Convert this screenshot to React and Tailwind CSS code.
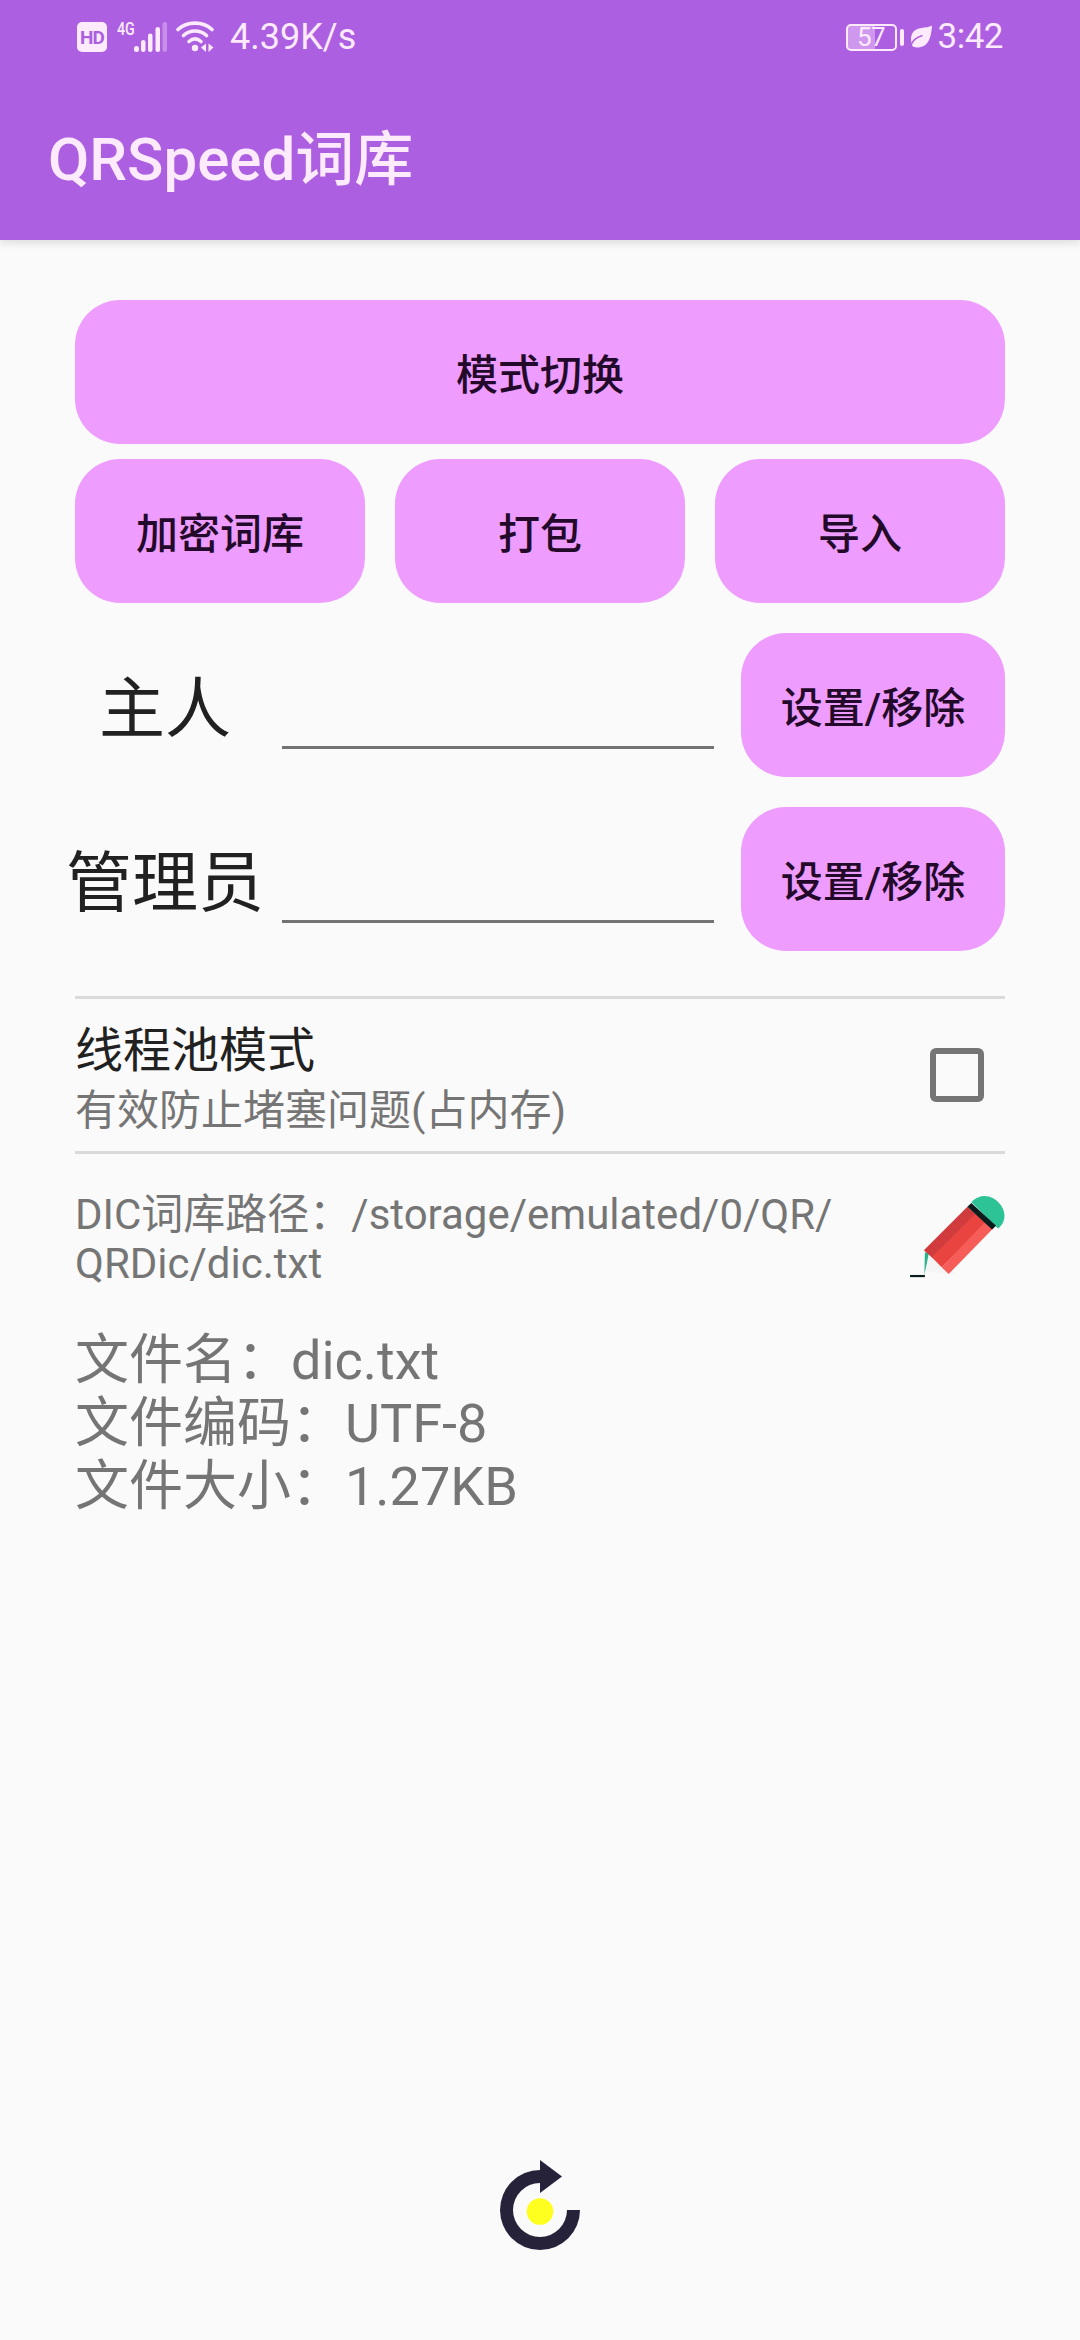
import { useState } from "react";

const details = [
  { label: "文件名", value: "dic.txt" },
  { label: "文件编码", value: "UTF-8" },
  { label: "文件大小", value: "1.27KB" },
];

const SignalIcon = () => (
  <svg className="w-[34px] h-[32px]" viewBox="0 0 34 32" fill="#fdeafd">
    <rect x="0" y="25" width="5" height="6" rx="2.5" />
    <rect x="7" y="19" width="4.5" height="12" rx="2.2" />
    <rect x="14" y="12.5" width="4.5" height="18.5" rx="2.2" />
    <rect x="21.5" y="6" width="4.5" height="25" rx="2.2" />
    <rect x="28.5" y="1" width="4.5" height="30" rx="2.2" opacity="0.35" />
  </svg>
);

const WifiIcon = () => (
  <svg className="w-[38px] h-[32px]" viewBox="0 0 38 32" fill="none" stroke="#fdeafd" strokeWidth="3.6" strokeLinecap="round">
    <path d="M2 8.5C11 0 27 0 36 8.5" />
    <path d="M7.5 14.5C14 8.5 24 8.5 30.5 14.5" />
    <path d="M13 20.5C17 17 21 17 25 20.5" />
    <circle cx="19" cy="27" r="3.2" fill="#fdeafd" stroke="none" />
    <path d="M30 22.500v8.500l-5-4.500zM32.500 31V22.500l5 4z" fill="#fdeafd" stroke="none" />
  </svg>
);

const LeafIcon = () => (
  <svg className="w-[23px] h-[26px]" viewBox="0 0 24 26">
    <path d="M23 1C22 13 20 24 7 24C5 24 3.5 23.5 2.5 22.5C-1 12 2 5 12 3.5C16 3 20 3 23 1Z" fill="#fdeafd" />
    <path d="M1 21.500C3 16 8 13 13 11.500" fill="none" stroke="#ac5fe0" strokeWidth="1.5" />
  </svg>
);

const PencilIcon = () => (
  <svg className="w-[95px] h-[85px]" viewBox="0 0 96 86">
    <path d="M15 77L36 80L46 80L18 53Z" fill="#f5f5f5" />
    <path d="M14.500 81L15 58L19 59Z" fill="#26b58a" />
    <path d="M62 7C72-3 84 1 90 8C97 15 98 27 89 34Z" fill="#2ec297" />
    <path d="M14 56L58 12L67 20L23 64Z" fill="#d03c3e" />
    <path d="M22 63L66 19L77 28L32 73Z" fill="#ea4440" />
    <path d="M32 73L76 27L84 34L39 80Z" fill="#f65d58" />
    <path d="M58 12L62 8L87 31L83 35Z" fill="#081d1c" />
    <path d="M0 82h15" stroke="#081d1c" strokeWidth="2.2" />
  </svg>
);

const RefreshIcon = () => (
  <svg className="w-[80px] h-[90px]" viewBox="0 0 80 90">
    <path d="M40 10A40 40 0 1 0 80 50H67A27 27 0 1 1 40 23V33L62 16.5L40 0Z" fill="#26223a" />
    <circle cx="40" cy="51.5" r="13.3" fill="#ffff1f" />
  </svg>
);

const ActionButton = ({ children, className = "" }) => (
  <button
    className={`h-[144px] rounded-[45px] bg-[#ee9cfd] pt-[7px] text-[42px] leading-[50px] font-medium text-[#240a2a] ${className}`}
  >
    {children}
  </button>
);

const AccountRow = ({ label }) => (
  <div className="flex h-[144px]">
    <div className="flex w-[180px] shrink-0 items-center justify-center pt-[10px] whitespace-nowrap text-[66px] leading-[78px] text-[#212121]">
      {label}
    </div>
    <input
      type="text"
      className="ml-[27px] h-[116px] w-[432px] border-b-[3px] border-[#737373] bg-transparent text-[54px] outline-none"
    />
    <ActionButton className="ml-[27px] w-[264px]">设置/移除</ActionButton>
  </div>
);

const App = () => {
  const [poolMode, setPoolMode] = useState(false);

  return (
    <div className="flex min-h-[2340px] w-[1080px] flex-col bg-[#fafafa] font-['Roboto','Noto_Sans_CJK_SC',sans-serif]">
      <header className="h-[240px] bg-[#ac5fe0] text-[#fdeafd] shadow-[0_3px_8px_rgba(0,0,0,0.12)]">
        {/* Status bar */}
        <div className="flex h-[74px] items-center justify-between px-[77px]">
          <div className="flex items-center">
            <div className="flex h-[30px] w-[30px] items-center justify-center rounded-[5px] bg-[#fdeafd] text-[19px] leading-none font-bold tracking-[-1px] text-[#ac5fe0]">
              HD
            </div>
            <div className="ml-[10px] flex h-[32px] items-start">
              <span className="w-[17px] origin-left scale-x-75 text-[19px] leading-[15px] font-medium">4G</span>
              <SignalIcon />
            </div>
            <div className="ml-[8px]">
              <WifiIcon />
            </div>
            <span className="ml-[16px] text-[36px] leading-[42px]">4.39K/s</span>
          </div>
          <div className="flex items-center">
            <div className="flex h-[27px] w-[51px] items-center justify-center rounded-[5px] border-2 border-[#fdeafd] bg-linear-to-r from-[#cf98ee] from-57% to-[#ac5fe0] to-57% text-[26px] leading-none tracking-[-0.5px]">
              57
            </div>
            <div className="ml-[3px] h-[17px] w-[4px] rounded-[2px] bg-[#fdeafd]"></div>
            <div className="ml-[6px] mr-[5px]">
              <LeafIcon />
            </div>
            <span className="text-[35px] leading-[42px] tracking-[-0.5px]">3:42</span>
          </div>
        </div>

        <h1 className="pt-[49px] pl-[48px] text-[60px] leading-[74px] font-medium">
          QRSpeed<span className="text-[59px]">词库</span>
        </h1>
      </header>

      <main className="flex flex-col px-[75px] pt-[60px]">
        <ActionButton>模式切换</ActionButton>
        <div className="mt-[15px] grid grid-cols-3 gap-[30px]">
          <ActionButton>加密词库</ActionButton>
          <ActionButton>打包</ActionButton>
          <ActionButton>导入</ActionButton>
        </div>

        <div className="mt-[30px] flex flex-col gap-[30px]">
          <AccountRow label="主人" />
          <AccountRow label="管理员" />
        </div>

        {/* Thread pool setting */}
        <div className="mt-[45px] flex h-[158px] items-center justify-between border-y-[3px] border-[#dadada] pr-[21px]">
          <div className="pt-[7px]">
            <div className="text-[48px] leading-[63px] text-[#212121]">线程池模式</div>
            <div className="text-[42px] leading-[57px] text-[#757575]">有效防止堵塞问题(占内存)</div>
          </div>
          <button
            aria-pressed={poolMode}
            onClick={() => setPoolMode(!poolMode)}
            className={`h-[54px] w-[54px] rounded-[6px] border-[6px] border-[#757575] ${poolMode ? "bg-[#757575]" : ""}`}
          ></button>
        </div>

        {/* Dictionary path */}
        <div className="mt-[36px] flex items-start justify-between text-[#757575]">
          <p className="text-[42px] leading-[49px]">
            DIC词库路径：/storage/emulated/0/QR/
            <br />
            QRDic/dic.txt
          </p>
          <div className="mt-[5px]">
            <PencilIcon />
          </div>
        </div>

        <div className="mt-[41px] text-[54px] leading-[63px] text-[#757575]">
          {details.map((item) => (
            <div key={item.label}>
              {item.label}：{item.value}
            </div>
          ))}
        </div>
      </main>

      <div className="mt-auto flex justify-center pb-[90px]">
        <RefreshIcon />
      </div>
    </div>
  );
};

export default App;
